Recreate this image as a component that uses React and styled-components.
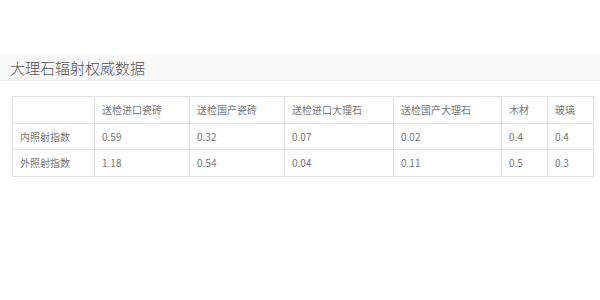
import styled, { createGlobalStyle } from "styled-components";

const GlobalStyle = createGlobalStyle`
  body {
    margin: 0;
    background: #fff;
    font-family: "Noto Sans CJK SC", "Noto Sans", sans-serif;
  }
`;

const Page = styled.div`
  width: 600px;
  height: 300px;
  padding-top: 55px;
  box-sizing: border-box;
`;

const TitleBar = styled.div`
  height: 26px;
  display: flex;
  align-items: center;
  padding-left: 10px;
  background-color: #f8f8f8;
  border-bottom: 1px solid #f0f0f0;
  box-sizing: border-box;
`;

const Title = styled.h2`
  margin: 0;
  font-size: 15px;
  font-weight: 300;
  color: #555;
  line-height: 1;
`;

const Table = styled.table`
  margin: 15px 0 0 12px;
  width: 582px;
  border-collapse: collapse;
  table-layout: fixed;
  font-size: 10px;
  color: #777;
`;

const Cell = styled.td`
  height: 26.7px;
  padding: 0 7px;
  border: 1px solid #e2e2e2;
  text-align: left;
  vertical-align: middle;
  line-height: 1;
  white-space: nowrap;
  box-sizing: border-box;
`;

const widths = [82, 95, 95, 109, 108, 46, 46];
const heads = ["", "送检进口瓷砖", "送检国产瓷砖", "送检进口大理石", "送检国产大理石", "木材", "玻璃"];
const rows = [
  ["内照射指数", "0.59", "0.32", "0.07", "0.02", "0.4", "0.4"],
  ["外照射指数", "1.18", "0.54", "0.04", "0.11", "0.5", "0.3"],
];

function App() {
  return (
    <Page>
      <GlobalStyle />
      <TitleBar>
        <Title>大理石辐射权威数据</Title>
      </TitleBar>
      <Table>
        <colgroup>
          {widths.map((w, i) => (
            <col key={i} style={{ width: w }} />
          ))}
        </colgroup>
        <tbody>
          <tr>
            {heads.map((h, i) => (
              <Cell key={i}>{h}</Cell>
            ))}
          </tr>
          {rows.map((r, i) => (
            <tr key={i}>
              {r.map((c, j) => (
                <Cell key={j}>{c}</Cell>
              ))}
            </tr>
          ))}
        </tbody>
      </Table>
    </Page>
  );
}

export default App;
